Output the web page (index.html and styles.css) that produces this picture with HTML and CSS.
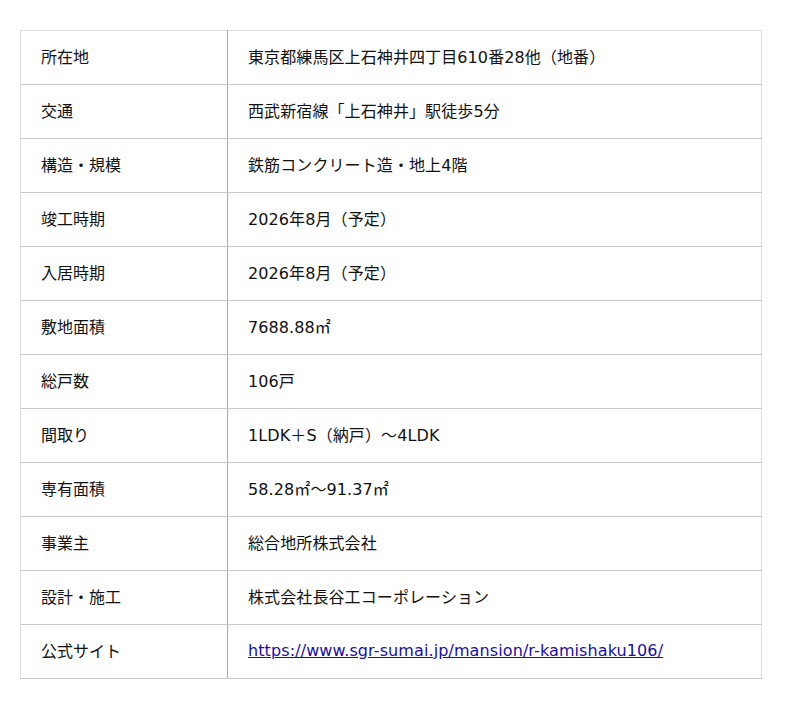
FILE: index.html
```html
<!DOCTYPE html>
<html lang="ja">
<head>
<meta charset="utf-8">
<link rel="stylesheet" href="styles.css">
</head>
<body>
<table class="spec">
<tr><th>所在地</th><td>東京都練馬区上石神井四丁目610番28他（地番）</td></tr>
<tr><th>交通</th><td>西武新宿線「上石神井」駅徒歩5分</td></tr>
<tr><th>構造・規模</th><td>鉄筋コンクリート造・地上4階</td></tr>
<tr><th>竣工時期</th><td>2026年8月（予定）</td></tr>
<tr><th>入居時期</th><td>2026年8月（予定）</td></tr>
<tr><th>敷地面積</th><td>7688.88㎡</td></tr>
<tr><th>総戸数</th><td>106戸</td></tr>
<tr><th>間取り</th><td>1LDK＋S（納戸）～4LDK</td></tr>
<tr><th>専有面積</th><td>58.28㎡～91.37㎡</td></tr>
<tr><th>事業主</th><td>総合地所株式会社</td></tr>
<tr><th>設計・施工</th><td>株式会社長谷工コーポレーション</td></tr>
<tr><th>公式サイト</th><td><a href="#">https://www.sgr-sumai.jp/mansion/r-kamishaku106/</a></td></tr>
</table>
</body>
</html>
```
FILE: styles.css
```css
html, body {
  margin: 0;
  background: #fff;
}
body {
  padding: 30px 20px;
  font-family: "DejaVu Sans", "Noto Sans CJK JP", sans-serif;
  font-size: 16px;
  color: #111;
}
.spec {
  width: 742px;
  border-collapse: collapse;
  border: 1px solid #ddd;
}
.spec th, .spec td {
  height: 54px;
  box-sizing: border-box;
  padding: 0 20px 3px;
  text-align: left;
  font-weight: normal;
  border-bottom: 1px solid #c8c8c8;
  vertical-align: middle;
}
.spec td {
  letter-spacing: 0.1px;
}
.spec th {
  width: 207px;
  border-right: 1px solid #aaa;
}
.spec a {
  color: #1a0dab;
}
```
